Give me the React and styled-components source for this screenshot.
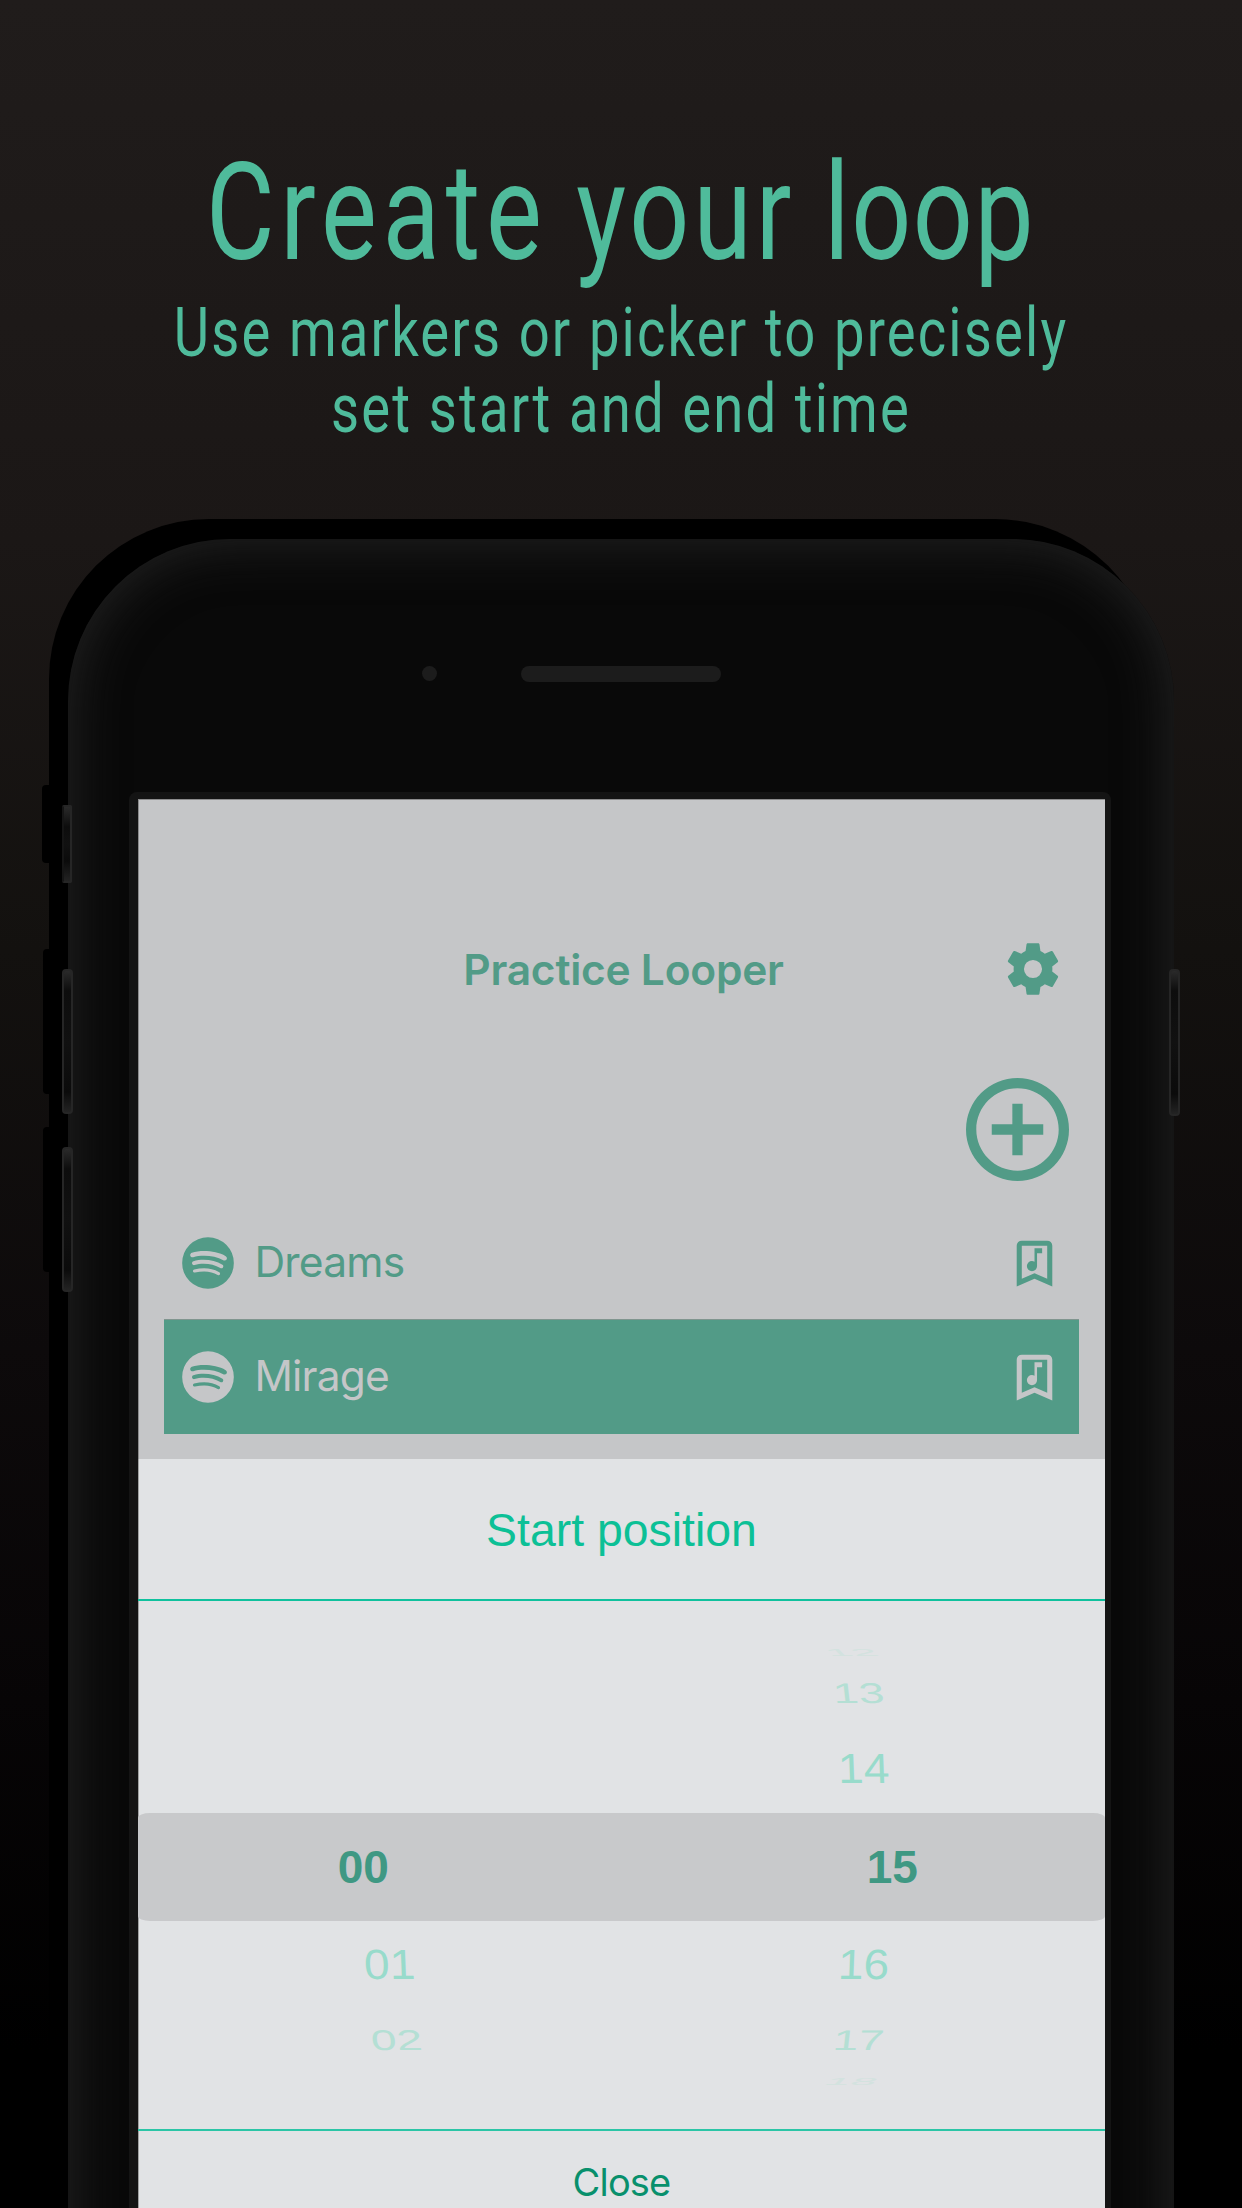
import React from "react";
import styled, { createGlobalStyle } from "styled-components";

const Global = createGlobalStyle`
  html, body { margin: 0; padding: 0; background: #000; }
  * { box-sizing: border-box; }
`;

const GREEN = "#529b87";
const GREY = "#c5c6c8";

const Page = styled.main`
  position: relative;
  width: 1242px;
  height: 2208px;
  overflow: hidden;
  display: flex;
  flex-direction: column;
  align-items: center;
  background: linear-gradient(#201c1b 0, #1b1716 540px, #13110f 950px, #0d0a0b 1350px, #070506 1700px, #000 2050px);
`;

const Heading = styled.header`
  flex: none;
  height: 538.5px;
  padding-top: 133px;
  display: flex;
  flex-direction: column;
  align-items: center;
  color: #4fbb9b;
  font-family: Roboto, "Liberation Sans", sans-serif;
  white-space: nowrap;
`;

const Title = styled.h1`
  margin: 0;
  font-size: 135px;
  line-height: 160px;
  font-weight: 400;
  word-spacing: 3px;
  transform: scaleX(0.78);
`;

const Word = styled.span`
  letter-spacing: ${(p) => p.$tracking}px;
`;

const Tagline = styled.p`
  margin: 0;
  padding-top: 3px;
  font-size: 68px;
  line-height: 75.5px;
  letter-spacing: 2.7px;
  word-spacing: 1px;
  text-align: center;
  transform: scaleX(0.8);
`;

const Shadow = styled.div`
  position: absolute;
  left: 49px;
  top: 518.5px;
  width: 1106px;
  height: 1900px;
  border-radius: 160px;
  background: #000;
`;

const SideShadow = styled.div`
  position: absolute;
  left: ${(p) => p.$x}px;
  top: ${(p) => p.$y}px;
  width: 20px;
  height: ${(p) => p.$h}px;
  border-radius: 4px;
  background: #000;
`;

const SideKey = styled.div`
  position: absolute;
  left: ${(p) => p.$x}px;
  top: ${(p) => p.$y}px;
  width: ${(p) => p.$w}px;
  height: ${(p) => p.$h}px;
  border: 2px solid #262626;
  border-left-color: ${(p) => (p.$flat ? "#151515" : "#262626")};
  border-radius: ${(p) => (p.$flat ? 2 : 4)}px;
  background: linear-gradient(#2a2a2a, #0d0d0d 20px, #111 50%, #0b0b0b calc(100% - 20px), #232323);
`;

const Phone = styled.section`
  position: relative;
  flex: none;
  width: 1106px;
  height: 1900px;
  padding: 253.5px 0 0 61px;
  border-radius: 162px;
  background: #090909;
  box-shadow: inset 0 0 50px 6px #212121;
`;

const Sensors = styled.div`
  position: absolute;
  left: 354px;
  top: 127px;
  display: flex;
  align-items: center;
  gap: 84px;
`;

const Camera = styled.i`
  width: 15px;
  height: 15px;
  border-radius: 50%;
  background: #1c1c1c;
`;

const Speaker = styled.i`
  width: 200px;
  height: 16px;
  border-radius: 8px;
  background: #1c1c1c;
`;

const Bezel = styled.div`
  width: 982px;
  padding: 7px 6px 0 9px;
  border-radius: 8px;
  background: #141414;
`;

const Screen = styled.div`
  width: 967px;
  height: 1500px;
  display: flex;
  flex-direction: column;
  background: ${GREY};
  box-shadow: inset 1px 1px 0 #8c8c8d;
  font-family: Inter, "Liberation Sans", sans-serif;
  color: ${GREEN};
`;

const NavBar = styled.div`
  display: grid;
  grid-template-columns: 1fr auto 1fr;
  align-items: center;
  height: 62px;
  margin-top: 139px;
  padding-right: 41px;
`;

const NavTitle = styled.h2`
  grid-column: 2;
  margin: 1px 0 0 45px;
  font-size: 42.5px;
  line-height: 50px;
  font-weight: 600;
  letter-spacing: -0.25px;
`;

const Icon = styled.svg`
  display: block;
  flex: none;
  width: ${(p) => p.$size}px;
  height: ${(p) => p.$size}px;
  fill: currentColor;
`;

const NavAction = styled.div`
  justify-self: end;
`;

const AddRow = styled.div`
  display: flex;
  justify-content: flex-end;
  padding: 78px 36px 0 0;
`;

const Tracks = styled.div`
  display: flex;
  flex-direction: column;
  padding: 25px 26px 0 26px;
`;

const Track = styled.div`
  display: flex;
  align-items: center;
  height: ${(p) => (p.$active ? 115 : 113)}px;
  padding: 0 14px 0 13px;
  border-top: 1px solid ${(p) => (p.$active ? "#80958f" : "transparent")};
  background: ${(p) => (p.$active ? GREEN : "transparent")};
  color: ${(p) => (p.$active ? GREY : GREEN)};
`;

const TrackName = styled.span`
  flex: 1;
  padding-left: 15.5px;
  margin-top: -2px;
  font-size: 42.5px;
  line-height: 50px;
  letter-spacing: -0.8px;
`;

const Sheet = styled.div`
  flex: 1;
  margin-top: 25px;
  background: #e1e3e5;
  box-shadow: inset 1px 0 0 #a0a1a2;
`;

const SheetTitle = styled.div`
  height: 142px;
  padding-top: 2px;
  border-bottom: 2px solid #0fc19d;
  display: flex;
  align-items: center;
  justify-content: center;
  font-family: "Liberation Sans", Arial, sans-serif;
  font-size: 46.4px;
  color: #0cc096;
`;

const Picker = styled.div`
  height: 530px;
  padding-top: 35px;
  border-bottom: 2px solid #2bc5a6;
  display: grid;
  grid-template-columns: 1fr 1fr;
  grid-template-rows: 32px 49px 102px 96px 98px 54px 27px;
  align-items: center;
  justify-items: center;
  font-family: "Liberation Sans", Arial, sans-serif;
  font-size: 46px;
  line-height: 46px;
`;

const Band = styled.div`
  grid-row: 4;
  grid-column: 1 / 3;
  justify-self: stretch;
  height: 108px;
  margin: -6px 0;
  border-radius: 12px / 5px;
  background: #c8c9cb;
`;

const tones = ["#3f9883", "#98dbcb", "#b4dfd4", "#d3e2df"];
const squash = [1, 0.92, 0.62, 0.22];

const Digit = styled.span`
  grid-column: ${(p) => p.$col};
  grid-row: ${(p) => p.$row};
  color: ${(p) => tones[p.$depth]};
  font-weight: ${(p) => (p.$depth ? 400 : 700)};
  transform: translateX(${(p) => p.$dx}px) scaleY(${(p) => squash[p.$depth]}) skewX(${(p) => p.$skew || 0}deg);
`;

const Close = styled.div`
  padding-top: 27px;
  text-align: center;
  font-size: 38px;
  line-height: 48px;
  letter-spacing: -0.8px;
  color: #08906c;
`;

const digits = [
  { t: "12", col: 2, row: 1, depth: 3, dx: -12, skew: 12 },
  { t: "13", col: 2, row: 2, depth: 2, dx: -5, skew: 4 },
  { t: "14", col: 2, row: 3, depth: 1, dx: 0, skew: 2 },
  { t: "00", col: 1, row: 4, depth: 0, dx: -16.5 },
  { t: "15", col: 2, row: 4, depth: 0, dx: 29 },
  { t: "01", col: 1, row: 5, depth: 1, dx: 10, skew: 2 },
  { t: "16", col: 2, row: 5, depth: 1, dx: 0, skew: -2 },
  { t: "02", col: 1, row: 6, depth: 2, dx: 17, skew: 4 },
  { t: "17", col: 2, row: 6, depth: 2, dx: -5, skew: -4 },
  { t: "18", col: 2, row: 7, depth: 3, dx: -12, skew: -12 },
];

const Cog = () => (
  <Icon $size={62} viewBox="0 0 24 24">
    <path d="M12,15.5A3.5,3.5 0 0,1 8.5,12A3.5,3.5 0 0,1 12,8.5A3.5,3.5 0 0,1 15.5,12A3.5,3.5 0 0,1 12,15.5M19.43,12.97C19.47,12.65 19.5,12.33 19.5,12C19.5,11.67 19.47,11.34 19.43,11L21.54,9.37C21.73,9.22 21.78,8.95 21.66,8.73L19.66,5.27C19.54,5.05 19.27,4.96 19.05,5.05L16.56,6.05C16.04,5.66 15.5,5.32 14.87,5.07L14.5,2.42C14.46,2.18 14.25,2 14,2H10C9.75,2 9.54,2.18 9.5,2.42L9.13,5.07C8.5,5.32 7.96,5.66 7.44,6.05L4.95,5.05C4.73,4.96 4.46,5.05 4.34,5.27L2.34,8.73C2.21,8.95 2.27,9.22 2.46,9.37L4.57,11C4.53,11.34 4.5,11.67 4.5,12C4.5,12.33 4.53,12.65 4.57,12.97L2.46,14.63C2.27,14.78 2.21,15.05 2.34,15.27L4.34,18.73C4.46,18.95 4.73,19.03 4.95,18.95L7.44,17.94C7.96,18.34 8.5,18.68 9.13,18.93L9.5,21.58C9.54,21.82 9.75,22 10,22H14C14.25,22 14.46,21.82 14.5,21.58L14.87,18.93C15.5,18.67 16.04,18.34 16.56,17.94L19.05,18.95C19.27,19.03 19.54,18.95 19.66,18.73L21.66,15.27C21.78,15.05 21.73,14.78 21.54,14.63L19.43,12.97Z" />
  </Icon>
);

const Add = () => (
  <Icon $size={103} viewBox="2 2 20 20">
    <path d="M12 20c-4.41 0-8-3.59-8-8s3.59-8 8-8 8 3.59 8 8-3.59 8-8 8m0-18A10 10 0 0 0 2 12a10 10 0 0 0 10 10 10 10 0 0 0 10-10A10 10 0 0 0 12 2m1 5h-2v4H7v2h4v4h2v-4h4v-2h-4V7z" />
  </Icon>
);

const Spotify = () => (
  <Icon $size={62} viewBox="0 0 24 24">
    <path d="M17.9,10.9C14.7,9 9.35,8.8 6.3,9.75C5.8,9.9 5.3,9.6 5.15,9.15C5,8.65 5.3,8.15 5.75,8C9.3,6.95 15.15,7.15 18.85,9.35C19.3,9.6 19.45,10.2 19.2,10.65C18.95,11 18.35,11.15 17.9,10.9M17.8,13.7C17.55,14.05 17.1,14.2 16.75,13.95C14.05,12.3 9.95,11.8 6.8,12.8C6.4,12.9 5.95,12.7 5.85,12.3C5.75,11.9 5.95,11.45 6.35,11.35C10,10.25 14.5,10.8 17.6,12.7C17.9,12.85 18.05,13.35 17.8,13.7M16.6,16.45C16.4,16.75 16.05,16.85 15.75,16.65C13.4,15.2 10.45,14.9 6.95,15.7C6.6,15.8 6.3,15.55 6.2,15.25C6.1,14.9 6.35,14.6 6.65,14.5C10.45,13.65 13.75,14 16.35,15.6C16.7,15.75 16.75,16.15 16.6,16.45M12,2A10,10 0 0,0 2,12A10,10 0 0,0 12,22A10,10 0 0,0 22,12A10,10 0 0,0 12,2Z" />
  </Icon>
);

const BookmarkMusic = () => (
  <Icon $size={61} viewBox="0 0 24 24">
    <path d="M17 18V5H7v13l5-2.18L17 18m0-15a2 2 0 0 1 2 2v16l-7-3-7 3V5a2 2 0 0 1 2-2h10m-2 3v2h-2v5a2 2 0 1 1-2-2c.37 0 .7.1 1 .27V6h3z" />
  </Icon>
);

export default function App() {
  return (
    <Page>
      <Global />
      <Shadow />
      <SideShadow $x={42} $y={785} $h={78} />
      <SideShadow $x={43} $y={949} $h={145} />
      <SideShadow $x={43} $y={1127} $h={145} />
      <Heading>
        <Title>
          <Word $tracking={7.5}>Create</Word> <Word $tracking={5.3}>your</Word> <Word $tracking={2}>loop</Word>
        </Title>
        <Tagline>
          Use markers or picker to precisely
          <br />
          set start and end time
        </Tagline>
      </Heading>
      <Phone>
        <Sensors>
          <Camera />
          <Speaker />
        </Sensors>
        <Bezel>
          <Screen>
            <NavBar>
              <NavTitle>Practice Looper</NavTitle>
              <NavAction>
                <Cog />
              </NavAction>
            </NavBar>
            <AddRow>
              <Add />
            </AddRow>
            <Tracks>
              {["Dreams", "Mirage"].map((name, i) => (
                <Track key={name} $active={i === 1}>
                  <Spotify />
                  <TrackName>{name}</TrackName>
                  <BookmarkMusic />
                </Track>
              ))}
            </Tracks>
            <Sheet>
              <SheetTitle>Start position</SheetTitle>
              <Picker>
                <Band />
                {digits.map((d) => (
                  <Digit key={d.t} $col={d.col} $row={d.row} $depth={d.depth} $dx={d.dx} $skew={d.skew}>
                    {d.t}
                  </Digit>
                ))}
              </Picker>
              <Close>Close</Close>
            </Sheet>
          </Screen>
        </Bezel>
      </Phone>
      <SideKey $x={62} $y={804.5} $w={10} $h={78} $flat />
      <SideKey $x={62} $y={969} $w={11} $h={145} />
      <SideKey $x={62} $y={1147} $w={11} $h={145} />
      <SideKey $x={1169} $y={969} $w={11} $h={147} />
    </Page>
  );
}
